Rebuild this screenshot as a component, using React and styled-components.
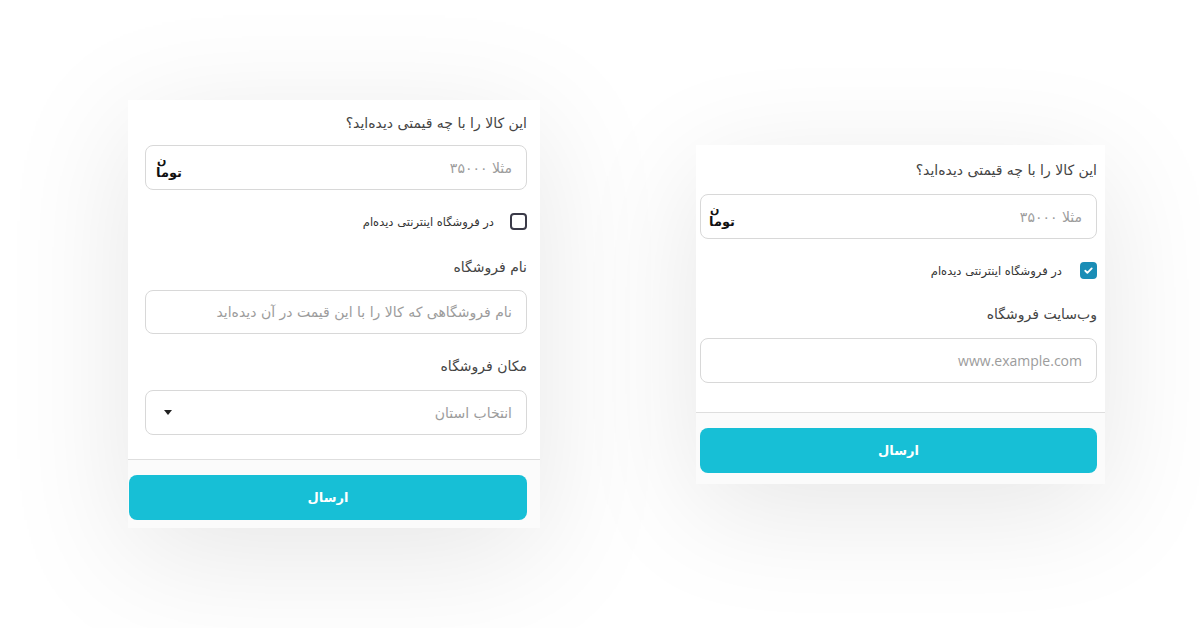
import { createGlobalStyle, styled } from "styled-components";

const Global = createGlobalStyle`
    html, body {
        margin: 0;
        background: #ffffff;
    }
    * {
        box-sizing: border-box;
    }
`

const Page = styled.div`
    width: 1200px;
    height: 628px;
    display: flex;
    align-items: flex-start;
    gap: 156px;
    padding: 100px 0 0 128px;
    overflow: hidden;
    font-family: "DejaVu Sans", "Noto Sans", sans-serif;
`

const Card = styled.div`
    width: ${({ $w }) => $w}px;
    margin-top: ${({ $top }) => $top || 0}px;
    background: #ffffff;
    direction: rtl;
    box-shadow: 0 26px 120px rgba(0, 0, 0, 0.1);
`

const Body = styled.div`
    display: flex;
    flex-direction: column;
    padding: ${({ $pad }) => $pad};
`

const Title = styled.div`
    font-size: 14px;
    line-height: 20px;
    color: #444;
    margin-top: ${({ $mt }) => $mt || 0}px;
`

const Field = styled.div`
    height: ${({ $h }) => $h || 45}px;
    margin-top: ${({ $mt }) => $mt || 0}px;
    border: 1px solid #d8d8d8;
    border-radius: 8px;
    display: flex;
    align-items: center;
    justify-content: space-between;
    padding: 0 14px 0 ${({ $pl }) => $pl || 14}px;
`

const Placeholder = styled.span`
    font-size: 14px;
    color: #9c9c9c;
    direction: ${({ $ltr }) => ($ltr ? "ltr" : "rtl")};
    font-family: ${({ $ltr }) => ($ltr ? '"Open Sans", sans-serif' : "inherit")};
`

const Unit = styled.span`
    display: flex;
    flex-direction: column;
    align-items: flex-end;
    gap: 2px;
    color: #111;
    font-weight: bold;
`

const UnitTop = styled.span`
    font-size: 11px;
    line-height: 8px;
    padding-left: 1px;
`

const UnitBase = styled.span`
    font-size: 13px;
    line-height: 11px;
`

const CheckRow = styled.label`
    display: flex;
    align-items: center;
    gap: ${({ $gap }) => $gap}px;
    margin-top: ${({ $mt }) => $mt}px;
    font-size: 11.5px;
    color: #333;
`

const Box = styled.span`
    width: 17px;
    height: 17px;
    border-radius: 4px;
    display: flex;
    align-items: center;
    justify-content: center;
    border: 2px solid ${({ $on }) => ($on ? "#1a8db6" : "#3a3a48")};
    background: ${({ $on }) => ($on ? "#1a8db6" : "#fff")};
`

const Caret = styled.span`
    width: 0;
    height: 0;
    border-left: 4.5px solid transparent;
    border-right: 4.5px solid transparent;
    border-top: 5px solid #222;
`

const Divider = styled.div`
    height: 1px;
    background: #dedede;
    margin-top: ${({ $mt }) => $mt}px;
`

const Footer = styled.div`
    background: #fbfbfb;
    padding: ${({ $pad }) => $pad};
`

const Submit = styled.button`
    width: 100%;
    height: 45px;
    border: none;
    border-radius: 8px;
    background: #17bfd6;
    color: #fff;
    font-family: inherit;
    font-size: 13px;
    font-weight: bold;
    direction: rtl;
`

const Check = () => (
    <svg width="11" height="11" viewBox="0 0 24 24" fill="none" stroke="#fff" strokeWidth="4" strokeLinecap="round" strokeLinejoin="round">
        <path d="M5 12.5l4.5 4.5L19 7.5" />
    </svg>
)

const Toman = () => (
    <Unit>
        <UnitTop>ن</UnitTop>
        <UnitBase>توما</UnitBase>
    </Unit>
)

const App = () => {
    return (
        <>
            <Global />
            <Page>
                <Card $w={412}>
                    <Body $pad="13px 13px 0 17px">
                        <Title>این کالا را با چه قیمتی دیده‌اید؟</Title>
                        <Field $mt={12} $pl={10}>
                            <Placeholder>مثلا ۳۵۰۰۰</Placeholder>
                            <Toman />
                        </Field>
                        <CheckRow $mt={23} $gap={16}>
                            <Box />
                            در فروشگاه اینترنتی دیده‌ام
                        </CheckRow>
                        <Title $mt={27}>نام فروشگاه</Title>
                        <Field $mt={13} $h={44}>
                            <Placeholder>نام فروشگاهی که کالا را با این قیمت در آن دیده‌اید</Placeholder>
                        </Field>
                        <Title $mt={22}>مکان فروشگاه</Title>
                        <Field $mt={14} $pl={18}>
                            <Placeholder>انتخاب استان</Placeholder>
                            <Caret />
                        </Field>
                    </Body>
                    <Divider $mt={24} />
                    <Footer $pad="15px 13px 8px 1px">
                        <Submit>ارسال</Submit>
                    </Footer>
                </Card>
                <Card $w={409} $top={45}>
                    <Body $pad="15px 8px 0 4px">
                        <Title>این کالا را با چه قیمتی دیده‌اید؟</Title>
                        <Field $mt={14} $pl={8}>
                            <Placeholder>مثلا ۳۵۰۰۰</Placeholder>
                            <Toman />
                        </Field>
                        <CheckRow $mt={23} $gap={18}>
                            <Box $on>
                                <Check />
                            </Box>
                            در فروشگاه اینترنتی دیده‌ام
                        </CheckRow>
                        <Title $mt={25}>وب‌سایت فروشگاه</Title>
                        <Field $mt={14}>
                            <Placeholder $ltr>www.example.com</Placeholder>
                        </Field>
                    </Body>
                    <Divider $mt={29} />
                    <Footer $pad="15px 8px 11px 4px">
                        <Submit>ارسال</Submit>
                    </Footer>
                </Card>
            </Page>
        </>
    );
};

export default App;
